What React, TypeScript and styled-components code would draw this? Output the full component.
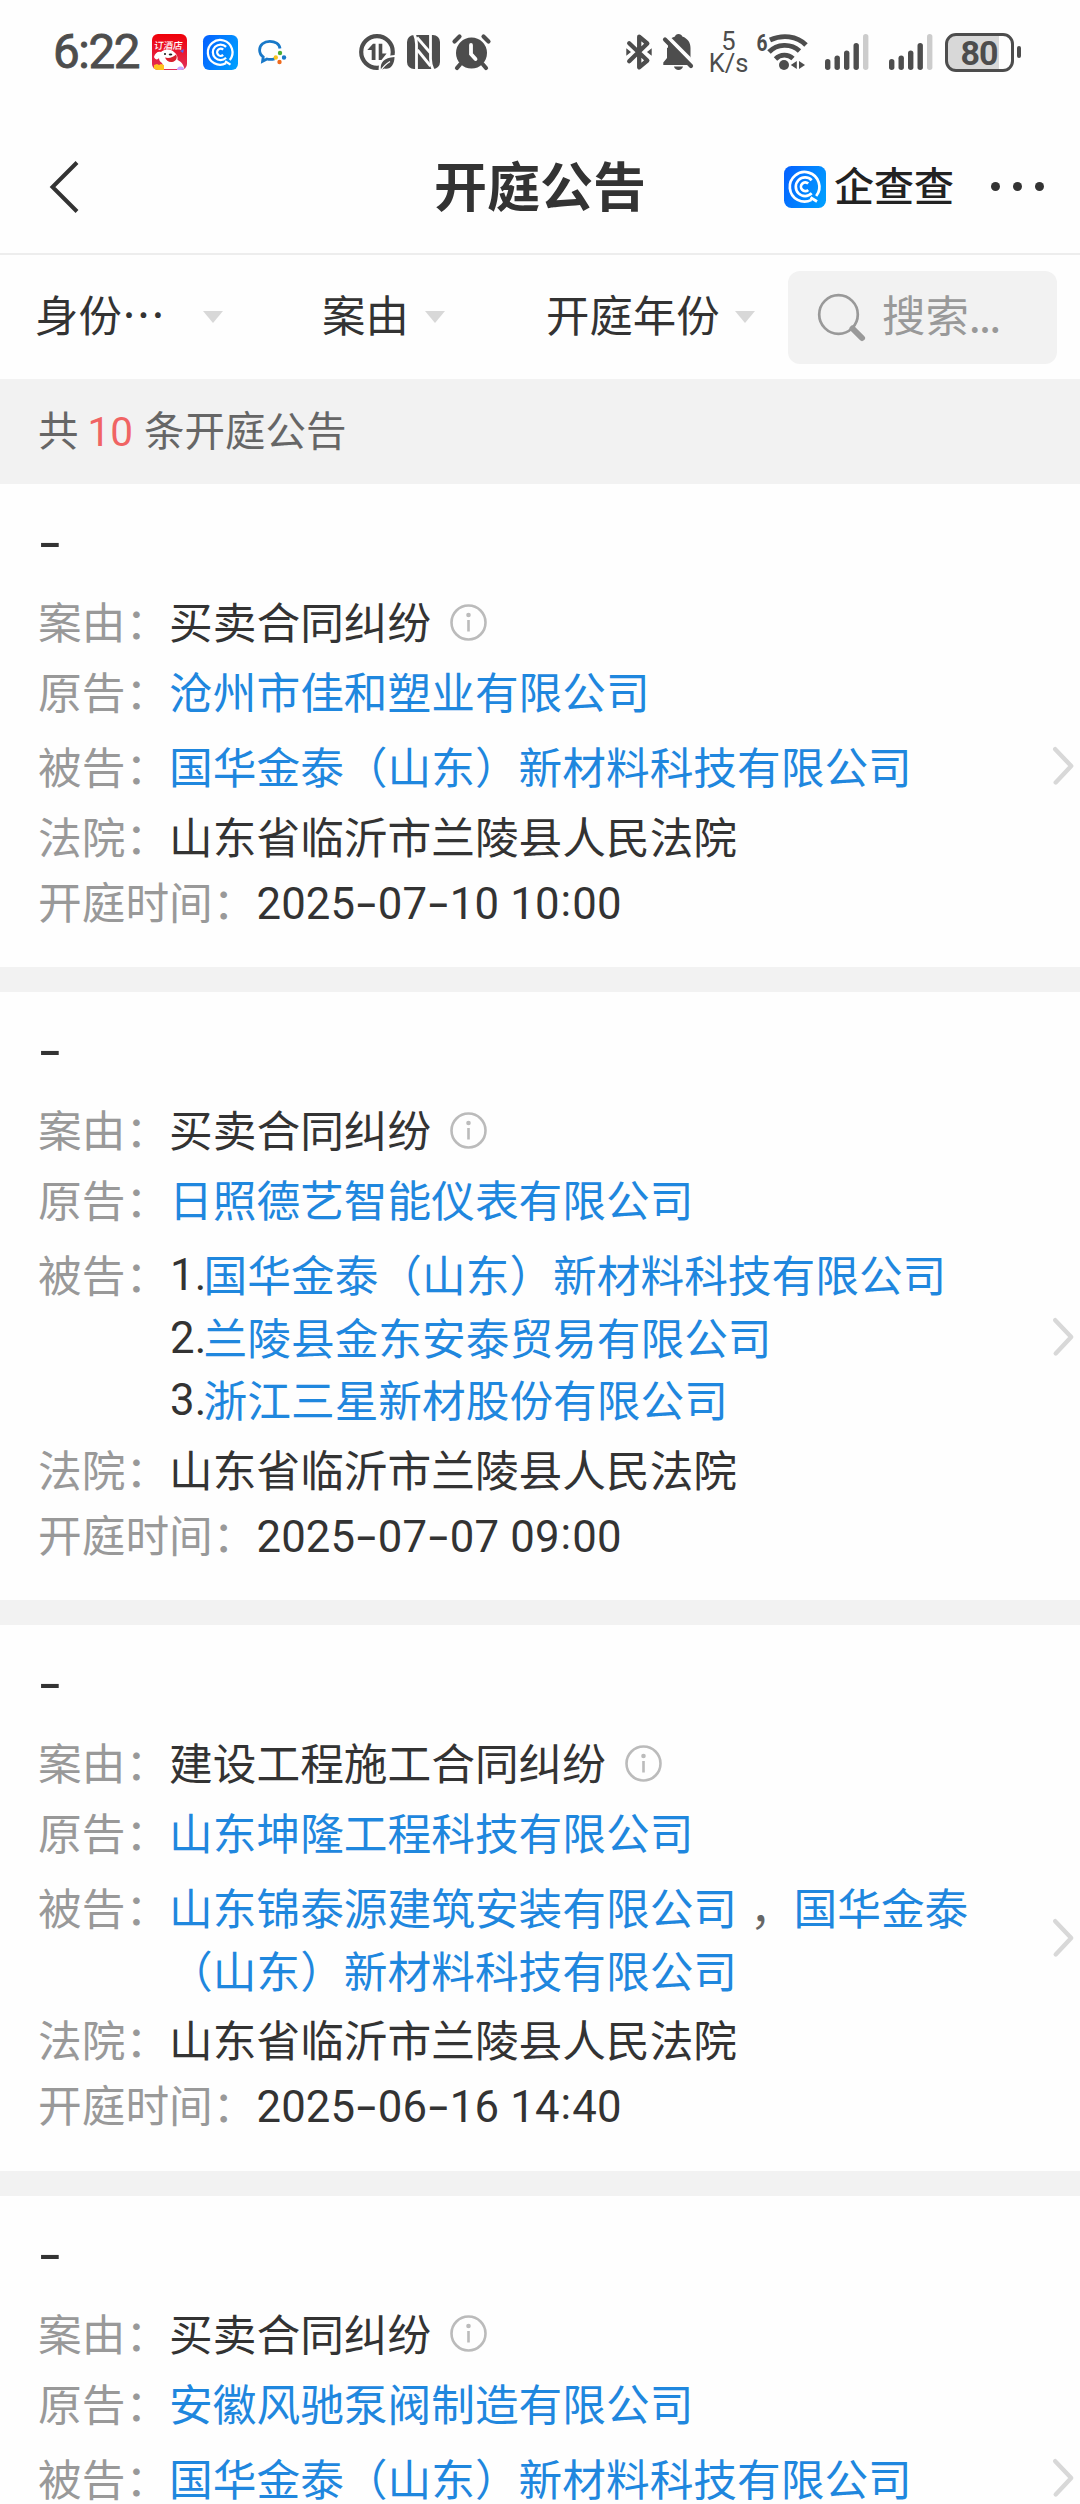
import React from "react";
import styled, { createGlobalStyle } from "styled-components";

const CJK = `"Noto Sans CJK SC", sans-serif`;

const Global = createGlobalStyle`
  body { margin: 0; background: #fefefe; }
  * { box-sizing: border-box; }
`;

const Page = styled.div`
  width: 1080px;
  height: 2504px;
  overflow: hidden;
  background: #fefefe;
  color: #333;
  font-family: Roboto, ${CJK};
  display: flex;
  flex-direction: column;
`;

/* ---------- status bar ---------- */
const StatusBar = styled.div`
  height: 120px;
  flex: none;
  padding: 29px 0 45px 53px;
  display: flex;
  align-items: center;
  color: #4d4d4d;
`;
const Clock = styled.span`
  width: 99px;
  font-size: 47.5px;
  font-weight: 400;
  -webkit-text-stroke: 0.9px #4d4d4d;
  letter-spacing: -1.4px;
  line-height: 46px;
  white-space: nowrap;
`;
const Icon = styled.svg<{ $gap?: number }>`
  display: block;
  flex: none;
  margin-left: ${(p) => p.$gap ?? 0}px;
  overflow: visible;
`;
const Speed = styled.div`
  width: 36px;
  margin-left: 18px;
  display: flex;
  flex-direction: column;
  align-items: center;
  font-size: 25.5px;
  line-height: 22px;
`;
const Battery = styled.div`
  width: 69px;
  height: 39px;
  margin-left: 12px;
  border: 3px solid #4d4d4d;
  border-radius: 11px;
  background: linear-gradient(90deg, #d8d8d8 51px, transparent 51px);
  font-size: 34px;
  font-weight: 700;
  line-height: 34px;
  text-align: center;
  padding-right: 1px;
  letter-spacing: -1px;
`;
const BatteryTip = styled.div`
  width: 4px;
  height: 12px;
  margin-left: 3px;
  border-radius: 2px;
  background: #4d4d4d;
`;

/* ---------- header ---------- */
const Header = styled.header`
  height: 135px;
  flex: none;
  border-bottom: 2px solid #ededed;
  display: grid;
  grid-template-columns: 434px 350px 1fr;
  align-items: center;
  font-family: ${CJK};
`;
const Title = styled.h1`
  margin: 0 0 5px;
  font-size: 53px;
  line-height: 70px;
  font-weight: 700;
  white-space: nowrap;
`;
const Brand = styled.div`
  display: flex;
  align-items: center;
`;
const BrandName = styled.span`
  margin: 0 0 5px 8px;
  width: 120px;
  font-size: 40px;
  line-height: 50px;
  font-weight: 500;
  color: #222;
  white-space: nowrap;
`;
const Dots = styled.div`
  margin-left: 37px;
  display: flex;
  gap: 12.4px;
  i { width: 9.4px; height: 9.4px; border-radius: 50%; background: #333; }
`;

/* ---------- filters ---------- */
const Filters = styled.nav`
  height: 124px;
  flex: none;
  padding-left: 35px;
  display: grid;
  grid-template-columns: 287px 224px 242px 269px;
  align-items: center;
  font-family: ${CJK};
  font-size: 43.4px;
`;
const Filter = styled.div`
  display: flex;
  align-items: center;
  line-height: 60px;
  white-space: nowrap;
`;
const FilterText = styled.span`
  margin-bottom: 8px;
`;
const Caret = styled.span<{ $gap: number }>`
  margin-left: ${(p) => p.$gap}px;
  border: 10.5px solid transparent;
  border-top: 12px solid #d8d8d8;
  border-bottom: 0;
`;
const Search = styled.div`
  height: 93px;
  margin-top: 1px;
  border-radius: 12px;
  background: #f2f2f2;
  color: #999;
  display: flex;
  align-items: center;
  padding-left: 29px;
`;
const Placeholder = styled.span`
  margin: 0 0 9px 15px;
  line-height: 60px;
`;
const Ellipsis = styled.span`
  letter-spacing: -1.8px;
`;
const Count = styled.div`
  height: 105px;
  flex: none;
  padding-left: 38px;
  background: #f2f2f2;
  color: #666;
  font-size: 40.5px;
  line-height: 106px;
  white-space: pre;
`;
const Num = styled.span`
  margin: 0 1px 0 -1px;
  color: #f06464;
`;

/* ---------- cards ---------- */
const Card = styled.article`
  flex: none;
  border-bottom: 25px solid #f2f2f2;
  font-family: ${CJK};
  font-size: 43.7px;
`;
const CaseNo = styled.div`
  height: 81px;
  padding: 39px 0 0 39px;
`;
const NoMark = styled.span`
  display: block;
  width: 22px;
  height: 40px;
  line-height: 40px;
  text-align: center;
  font-weight: 500;
  font-family: Inter, sans-serif;
  transform: scaleX(1.25);
`;
const Body = styled.div`
  display: flex;
  align-items: center;
  min-height: 402px;
  padding-right: 6px;
`;
const Fields = styled.div`
  flex: 1;
  align-self: flex-start;
  padding: 24px 0 36px 38px;
`;
const Row = styled.div<{ $h: number }>`
  display: flex;
  height: ${(p) => p.$h}px;
  line-height: 62.5px;
  white-space: nowrap;
`;
const PartyRow = styled.div`
  display: flex;
  padding: 5px 0 7px;
  line-height: 62.5px;
  white-space: nowrap;
`;
const Label = styled.span`
  color: #999;
`;
const Value = styled.div`
  display: flex;
  flex-direction: column;
`;
const Line = styled.div`
  display: flex;
  align-items: center;
  height: 62.5px;
`;
const InfoSlot = styled.span`
  margin: 4px 0 0 19px;
`;
const Company = styled.a`
  color: #1f87de;
`;
const Comma = styled.span`
  color: #666;
  width: 56.5px;
  padding-left: 13px;
`;
const Numeric = styled.span`
  font-family: Roboto, sans-serif;
  letter-spacing: 0.15px;
`;
const Index = styled.span`
  width: 34.5px;
  padding-left: 1px;
`;
const Hyphen = styled.span`
  display: inline-block;
  width: 22.6px;
  line-height: 1;
  text-align: center;
  font-family: Inter, sans-serif;
  transform: scaleX(1.2);
`;
const Colon = styled.span`
  display: inline-block;
  width: 12.5px;
  line-height: 1;
  text-align: center;
  transform: translateY(-3px);
`;

const QLogo = ({ size, id, gap }: { size: number; id: string; gap?: number }) => (
  <Icon width={size} height={size} viewBox="0 0 42 42" $gap={gap}>
    <defs>
      <linearGradient id={id} x1="0" y1="0.3" x2="1" y2="0.7">
        <stop offset="0" stopColor="#0565ff" />
        <stop offset="1" stopColor="#009dff" />
      </linearGradient>
    </defs>
    <rect width="42" height="42" rx="7.5" fill={`url(#${id})`} />
    <g fill="none" stroke="#fff" strokeWidth="2.7">
      <path d="M32.2 30A14.8 14.8 0 1 0 27.5 33.9M26.5 31.5l6.5 4" />
      <path d="M27.7 14.2A9.3 9.3 0 1 0 27.7 27.3" />
      <path d="M24.2 17.6A4.3 4.3 0 1 0 24.2 23.9" />
    </g>
  </Icon>
);

const HotelApp = () => (
  <Icon width="35" height="36" viewBox="0 0 35 36">
    <defs>
      <linearGradient id="hotel" x1="0" y1="0" x2="0" y2="1">
        <stop offset="0" stopColor="#f00008" />
        <stop offset="1" stopColor="#e0305a" />
      </linearGradient>
      <clipPath id="hotelClip"><rect width="35" height="36" rx="6" /></clipPath>
    </defs>
    <g clipPath="url(#hotelClip)">
      <rect width="35" height="36" fill="url(#hotel)" />
      <path d="M2 23c1-4 4-6 7-5 3-3 9-3.500 13 0 3 2 4 5 3.500 8 3 1 6 4 7 9H11c0-3 0-4-1-6-2-1-3-3-3-5-1 2-4 2-5-1z" fill="#fff" />
      <path d="M13 23.500c4 1 8 0 11-3 2 3 0 7-4 7.500-3 .5-6-1.500-7-4.500z" fill="#d8202c" />
      <circle cx="13" cy="20" r="1.100" fill="#222" />
      <ellipse cx="18.500" cy="20.500" rx="1.800" ry="1.100" fill="#222" />
      <path d="M2 31l3-1 2 1 2-1 3 1v5H2z" fill="#ffc31f" />
      <path d="M25 36c0-3 3-5 7-2v2z" fill="#c9a6ff" />
      <path d="M28 17l4-2-1 4z" fill="#5a62e8" />
      <text x="17.500" y="15" fontSize="9.500" fontWeight="500" fill="#fff" textAnchor="middle" fontFamily="Noto Sans CJK SC" transform="skewX(-6)">订酒店</text>
    </g>
  </Icon>
);

const ChatApp = () => (
  <Icon width="28" height="36" viewBox="0 0 28 36" $gap={20}>
    <path d="M22 14.500C21.500 10 17 7.300 11.800 7.300 6 7.300 1.600 11 1.600 16c0 3 1.400 5.300 3.600 6.800L4.600 27.200 9 25c2.500.7 5 .6 7.500-.2" fill="none" stroke="#1878c8" strokeWidth="2.800" />
    <circle cx="22" cy="19" r="2.200" fill="#4cae35" />
    <circle cx="26" cy="23.500" r="2.200" fill="#1878c8" />
    <circle cx="21.500" cy="28" r="2.200" fill="#f06a1c" />
    <circle cx="17.800" cy="23.500" r="2.200" fill="#f9c21c" />
    <circle cx="22" cy="23.500" r="1.700" fill="#fefefe" />
  </Icon>
);

const DataSaver = () => (
  <Icon width="37" height="36" viewBox="0 0 37 36" $gap={73}>
    <circle cx="18" cy="18" r="15.800" fill="none" stroke="#4d4d4d" strokeWidth="4.200" />
    <path d="M20 38c-2-9 4-18 18-17v17z" fill="#fefefe" />
    <path d="M22 36c-1.500-7 3-12.500 13.500-13C35.500 31 31 36 25.500 34.500z" fill="#4d4d4d" />
    <path d="M22 36.500c2-4 5-6.500 9-9" fill="none" stroke="#fefefe" strokeWidth="1.300" />
    <path d="M16.500 26h-3.800V16H8.300L14 9.800h2.500zM19.700 9.800h3.600v9.700h4.300L22.500 26h-2.800z" fill="#4d4d4d" />
  </Icon>
);

const Nfc = () => (
  <Icon width="33" height="34" viewBox="0 0 33 34" $gap={11}>
    <rect width="33" height="34" rx="7" fill="#4d4d4d" />
    <g fill="none" stroke="#fefefe" strokeWidth="2.800">
      <path d="M9.500 34.500V9C9.500 5 9 3 7.500-.5" />
      <path d="M10 2.500L23.500 18" />
      <path d="M10.500 15L23.500 31" />
      <path d="M23.500-.5V24c0 4 .8 7 2.500 10.500" />
    </g>
  </Icon>
);

const Alarm = () => (
  <Icon width="39" height="36" viewBox="0 0 39 36" $gap={12} fill="none" stroke="#4d4d4d" strokeLinecap="round">
    <circle cx="19.500" cy="19" r="15.500" fill="#4d4d4d" stroke="none" />
    <path d="M2.500 7.500l5-5M31.500 2.500l5 5M8 30.500L5 34M31 30.500l3 3.500" strokeWidth="4.200" />
    <path d="M19 11v9l4.500 5" stroke="#fefefe" strokeWidth="3.800" />
  </Icon>
);

const Bluetooth = () => (
  <Icon width="26" height="36" viewBox="0 0 26 36" $gap={135}>
    <path d="M3.200 9.200L21.300 26.500 13.200 33.300V2.700l8.100 6.800L3.200 27.300" fill="none" stroke="#4d4d4d" strokeWidth="4.300" strokeLinecap="round" strokeLinejoin="round" />
    <path d="M.3 14.300v7.400L5 18zM25.700 14.300v7.400L21 18z" fill="#4d4d4d" />
  </Icon>
);

const Muted = () => (
  <Icon width="30" height="36" viewBox="0 0 30 36" $gap={10.5}>
    <path d="M15.500 0c2 0 3.300 1.200 3.800 2.600C25 4.500 27.500 9 27.500 14v9l2.500 5v3H.3v-2.500L4 24V13c0-5 3-9 8-10.400C12.400 1.200 13.500 0 15.500 0z" fill="#4d4d4d" />
    <path d="M11 32.500h9c-.5 2.300-2.300 3.500-4.500 3.500s-4-1.200-4.500-3.500z" fill="#4d4d4d" />
    <path d="M0-1.500L33 31.500" stroke="#fefefe" strokeWidth="4.200" />
    <path d="M-1 1v10l6 3V4z" fill="#fefefe" />
    <path d="M2 5.500L28 32" stroke="#4d4d4d" strokeWidth="4.200" strokeLinecap="round" />
  </Icon>
);

const Wifi = () => (
  <Icon width="51" height="36" viewBox="0 0 51 36" $gap={10.5}>
    <text x="-0.5" y="17" fontSize="23" fontWeight="700" fontFamily="Roboto" fill="#4d4d4d" textLength="11" lengthAdjust="spacingAndGlyphs">6</text>
    <g fill="none" stroke="#4d4d4d" strokeWidth="4.800">
      <path d="M13 6C25 .3 40 1.500 49 11" />
      <path d="M12 18C20 9.500 34 9 42.500 17" />
      <path d="M18.500 25C23.500 20 31 20 36 24.500" />
    </g>
    <circle cx="27" cy="31" r="5" fill="#4d4d4d" />
    <path d="M39.800 27v8l-6-4zM42 27v8l6-4z" fill="#4d4d4d" />
  </Icon>
);

const Bars = ({ gap }: { gap: number }) => (
  <Icon width="44" height="36" viewBox="0 0 44 36" $gap={gap}>
    {[25, 21.5, 16.5, 9, 0].map((y, i) => (
      <rect key={i} x={i * 9.5} y={y} width="5.4" height={36 - y} rx="2.7" fill={i === 4 ? "#ccc" : "#4d4d4d"} />
    ))}
  </Icon>
);

const Info = () => (
  <InfoSlot>
    <Icon width="37" height="37" viewBox="0 0 37 37" fill="none" stroke="#bbb">
      <circle cx="18.5" cy="18.5" r="17" strokeWidth="2.6" />
      <path d="M18.5 16v11.5" strokeWidth="2.6" />
      <circle cx="18.5" cy="11" r="2.3" fill="#bbb" stroke="none" />
    </Icon>
  </InfoSlot>
);

const Chevron = () => (
  <Icon width="22" height="40" viewBox="0 0 22 40" fill="none" stroke="#d8d8d8" strokeWidth="4.4" strokeLinecap="round" strokeLinejoin="round">
    <path d="M3.2 3.2L19.2 20 3.7 36.4" />
  </Icon>
);

type Part = { kind: "link" | "comma" | "index"; text: string };
type Hearing = { reason: string; plaintiff: string; defendants: Part[][]; court?: string; time?: string };

const link = (text: string): Part => ({ kind: "link", text });
const index = (text: string): Part => ({ kind: "index", text });
const COURT = "山东省临沂市兰陵县人民法院";

const hearings: Hearing[] = [
  {
    reason: "买卖合同纠纷",
    plaintiff: "沧州市佳和塑业有限公司",
    defendants: [[link("国华金泰（山东）新材料科技有限公司")]],
    court: COURT,
    time: "2025-07-10 10:00",
  },
  {
    reason: "买卖合同纠纷",
    plaintiff: "日照德艺智能仪表有限公司",
    defendants: [
      [index("1."), link("国华金泰（山东）新材料科技有限公司")],
      [index("2."), link("兰陵县金东安泰贸易有限公司")],
      [index("3."), link("浙江三星新材股份有限公司")],
    ],
    court: COURT,
    time: "2025-07-07 09:00",
  },
  {
    reason: "建设工程施工合同纠纷",
    plaintiff: "山东坤隆工程科技有限公司",
    defendants: [
      [link("山东锦泰源建筑安装有限公司"), { kind: "comma", text: "，" }, link("国华金泰")],
      [link("（山东）新材料科技有限公司")],
    ],
    court: COURT,
    time: "2025-06-16 14:40",
  },
  {
    reason: "买卖合同纠纷",
    plaintiff: "安徽风驰泵阀制造有限公司",
    defendants: [[link("国华金泰（山东）新材料科技有限公司")]],
  },
];

const PartText = ({ kind, text }: Part) =>
  kind === "link" ? (
    <Company>{text}</Company>
  ) : kind === "comma" ? (
    <Comma>{text}</Comma>
  ) : (
    <Index><Numeric>{text}</Numeric></Index>
  );

const TimeText = ({ value }: { value: string }) => (
  <span>
    <Numeric>
      {value.split("").map((c, i) =>
        c === "-" ? <Hyphen key={i}>-</Hyphen> : c === ":" ? <Colon key={i}>:</Colon> : c
      )}
    </Numeric>
  </span>
);

const HearingCard = ({ item }: { item: Hearing }) => (
  <Card>
    <CaseNo><NoMark>-</NoMark></CaseNo>
    <Body>
      <Fields>
        <Row $h={70}>
          <Label>案由：</Label>
          <Line>{item.reason}<Info /></Line>
        </Row>
        <Row $h={70}>
          <Label>原告：</Label>
          <Company>{item.plaintiff}</Company>
        </Row>
        <PartyRow>
          <Label>被告：</Label>
          <Value>
            {item.defendants.map((parts, i) => (
              <Line key={i}>{parts.map((p, j) => <PartText key={j} {...p} />)}</Line>
            ))}
          </Value>
        </PartyRow>
        {item.court && (
          <Row $h={65}>
            <Label>法院：</Label>
            <span>{item.court}</span>
          </Row>
        )}
        {item.time && (
          <Row $h={62.5}>
            <Label>开庭时间：</Label>
            <TimeText value={item.time} />
          </Row>
        )}
      </Fields>
      <Chevron />
    </Body>
  </Card>
);

export default function App() {
  return (
    <Page lang="zh-CN">
      <Global />
      <StatusBar>
        <Clock>6:22</Clock>
        <HotelApp />
        <QLogo size={35} id="q1" gap={16} />
        <ChatApp />
        <DataSaver />
        <Nfc />
        <Alarm />
        <Bluetooth />
        <Muted />
        <Speed><span>5</span><span>K/s</span></Speed>
        <Wifi />
        <Bars gap={17} />
        <Bars gap={20} />
        <Battery>80</Battery>
        <BatteryTip />
      </StatusBar>
      <Header>
        <Icon width="30" height="52" viewBox="0 0 30 52" $gap={49} fill="none" stroke="#333" strokeWidth="4">
          <path d="M28 1.5L3.5 26 28 50.5" />
        </Icon>
        <Title>开庭公告</Title>
        <Brand>
          <QLogo size={42} id="q2" />
          <BrandName>企查查</BrandName>
          <Dots><i /><i /><i /></Dots>
        </Brand>
      </Header>
      <Filters>
        <Filter><FilterText>身份⋯</FilterText><Caret $gap={38} /></Filter>
        <Filter><FilterText>案由</FilterText><Caret $gap={16} /></Filter>
        <Filter><FilterText>开庭年份</FilterText><Caret $gap={15} /></Filter>
        <Search>
          <Icon width="50" height="50" viewBox="0 0 50 50" fill="none" stroke="#999">
            <circle cx="21.5" cy="21.5" r="19.3" strokeWidth="2.7" />
            <path d="M35.5 35.5L45 45" strokeWidth="6" strokeLinecap="round" />
          </Icon>
          <Placeholder>搜索<Ellipsis>...</Ellipsis></Placeholder>
        </Search>
      </Filters>
      <Count>共 <Num>10</Num> 条开庭公告</Count>
      {hearings.map((h, i) => <HearingCard key={i} item={h} />)}
    </Page>
  );
}
